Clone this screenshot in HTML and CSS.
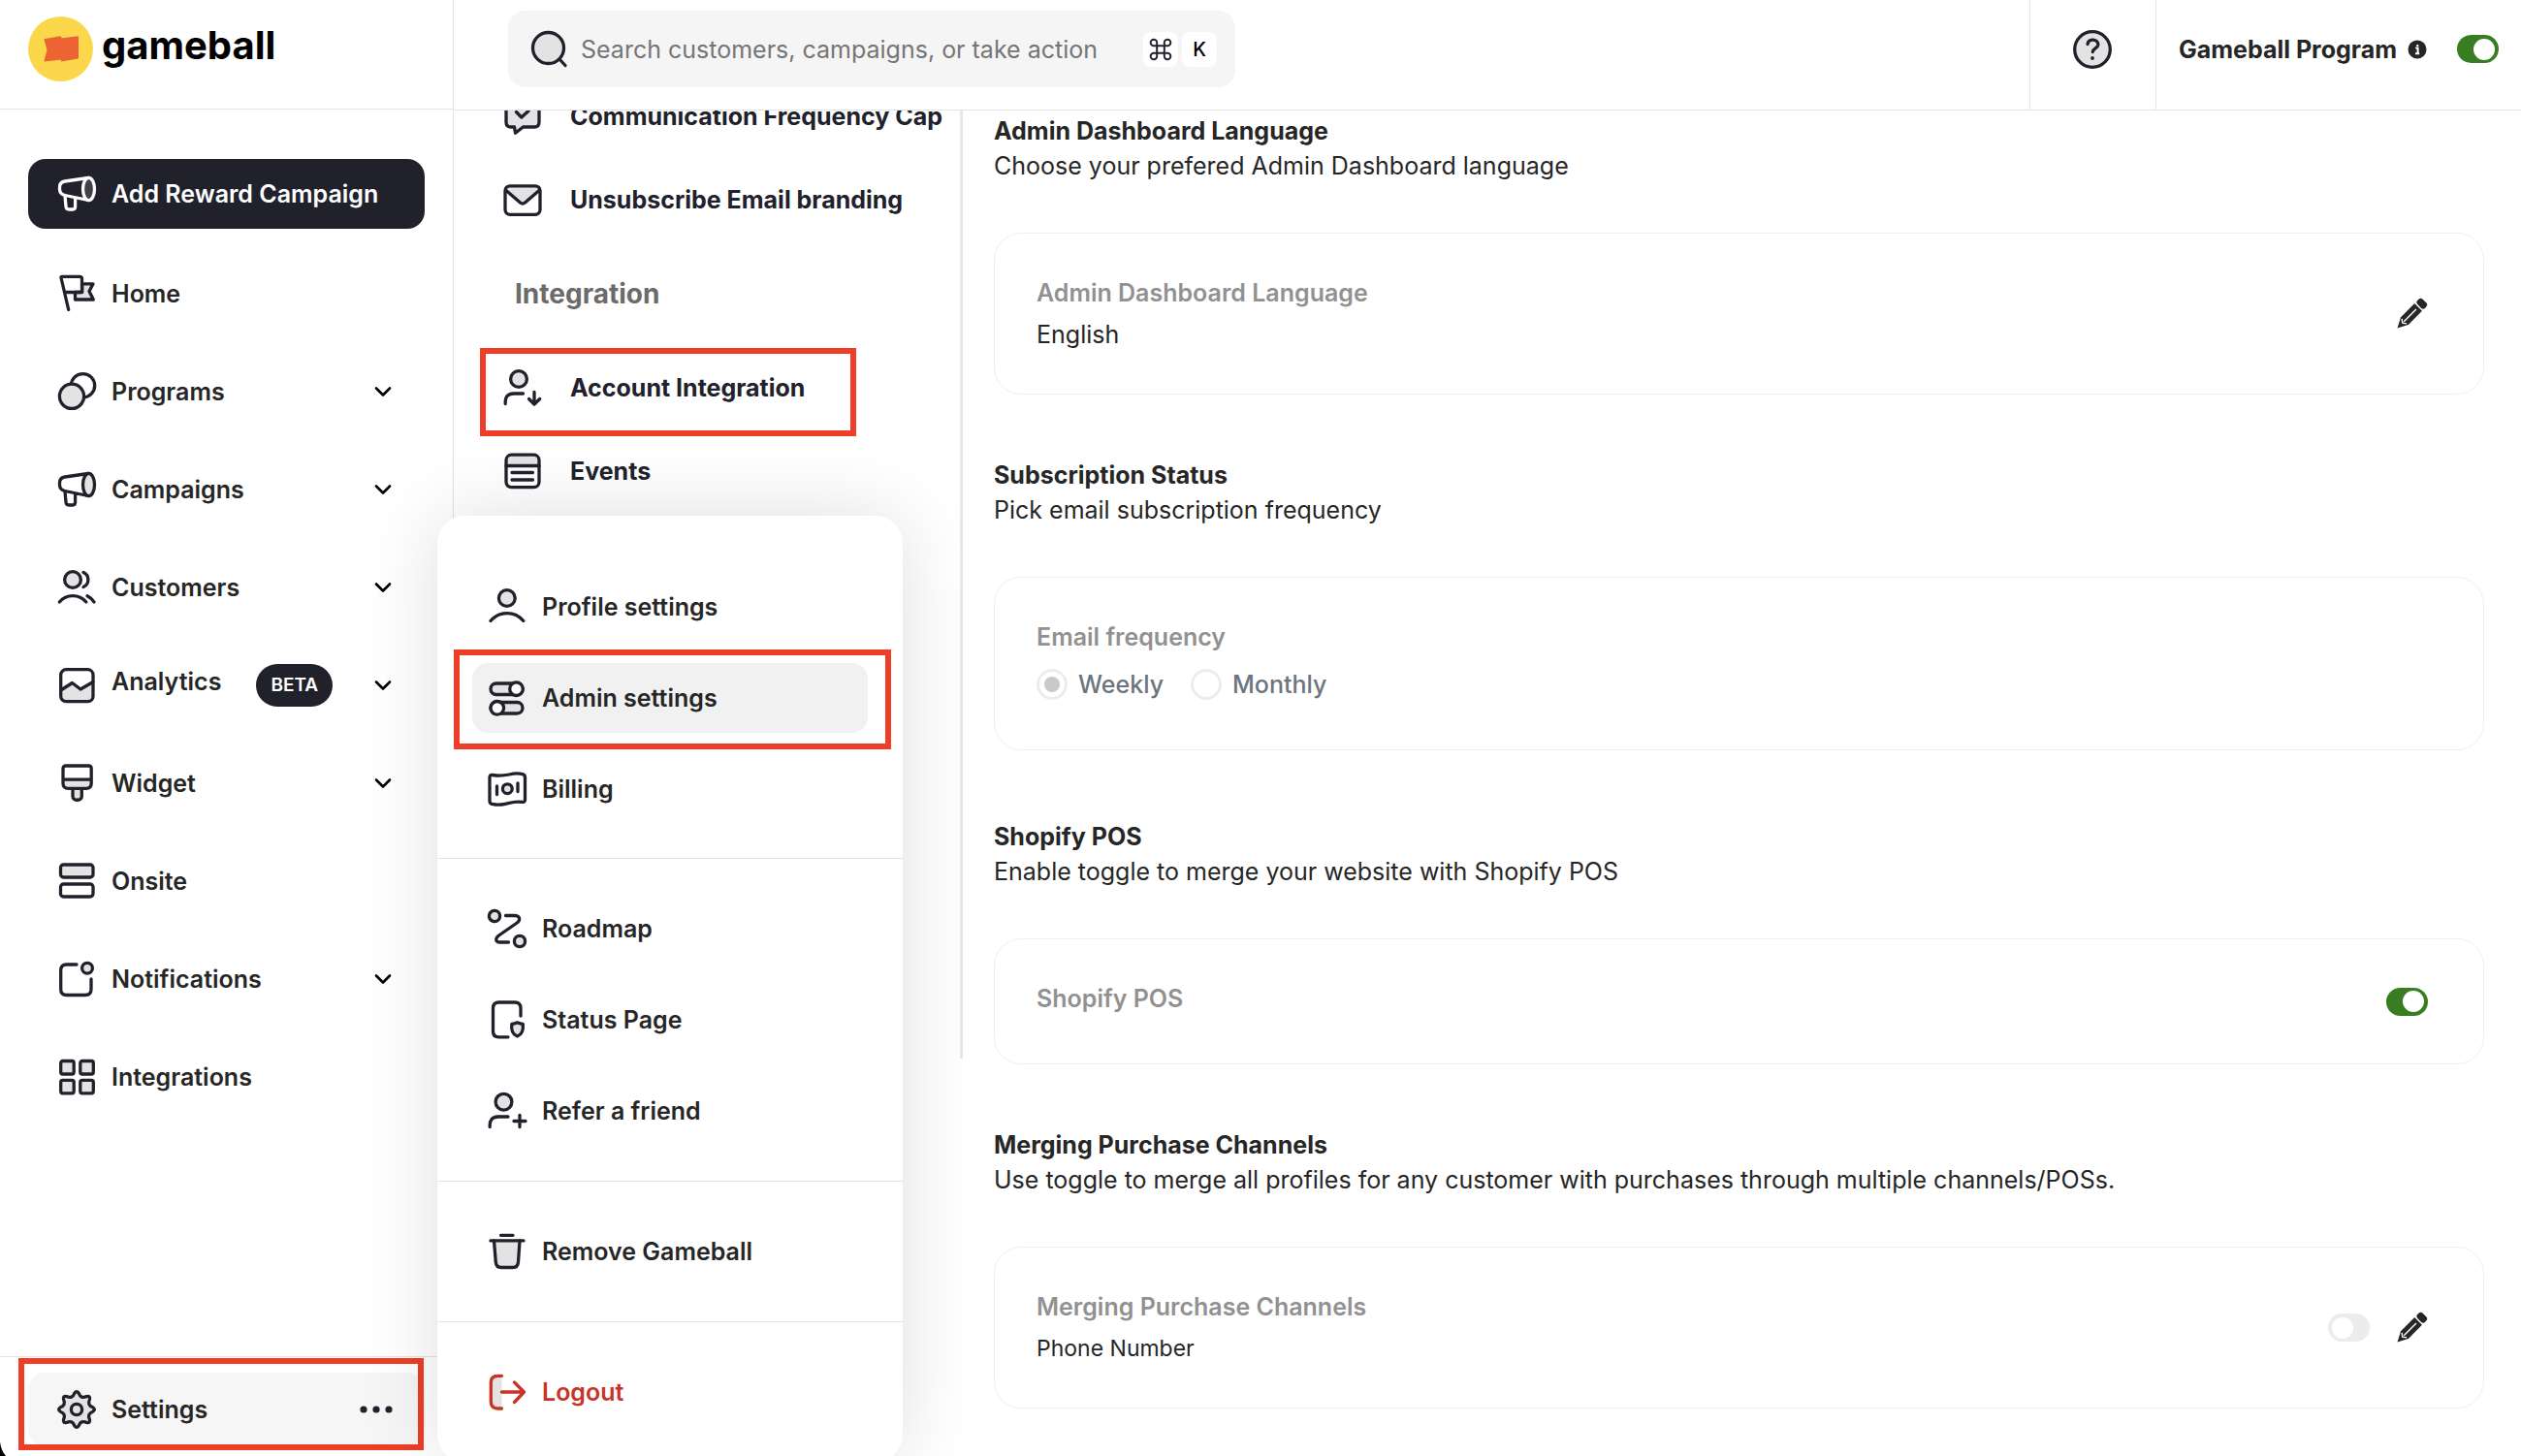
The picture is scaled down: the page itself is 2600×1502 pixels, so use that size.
FILE: index.html
```html
<!DOCTYPE html>
<html lang="en">
<head>
<meta charset="utf-8">
<meta name="viewport" content="width=device-width, initial-scale=1">
<title>Gameball – Admin settings</title>
<link rel="stylesheet" href="styles.css">
</head>
<body>
<div class="app">
  <aside class="sidebar">
    <a class="brand" href="#">
      <svg class="brand-mark" viewBox="0 0 66 66" aria-hidden="true"><circle cx="33" cy="33" r="33" fill="#fbd84b"/><path d="M17 23.5 33 20.8V22.8L50.5 20.8V42L34 45V43L17 45 20 34Z" fill="#ec6433" stroke="#ec6433" stroke-width="1.5" stroke-linejoin="round"/></svg>
      <span class="brand-name">gameball</span>
    </a>
    <nav class="nav" aria-label="Main">
      <button class="add-campaign" type="button">
        <svg class="icon" viewBox="0 0 40 40"><path class="line" d="M32 3.5 8 7C4 7.6 2.5 9.5 2.5 13v2c0 4 1.5 5.700 5.500 6.500L32 26.500M8 22 9 33C9.100 35 10 36 12 36h4c2 0 2.600-1 2.600-3V24"/><ellipse class="dim" cx="32.500" cy="15" rx="6" ry="11.700"/></svg>
        <span>Add Reward Campaign</span>
      </button>
      <a class="nav-item" href="#">
        <svg class="icon" viewBox="0 0 40 40"><path class="shade" d="M25.700 9.800H37L33 17.500 37.300 26H18.500V18.500H25.700Z"/><path class="line" d="M11.700 36.500 4 3.500Q3.800 2.300 5 2.300H23Q25.500 2.300 25.500 4.500V16Q25.500 18.500 23 18.500H7.500"/></svg>
        <span>Home</span>
      </a>
      <button class="nav-item" type="button" aria-expanded="false">
        <svg class="icon" viewBox="0 0 40 40"><circle class="line" cx="26.500" cy="13.800" r="12.200"/><circle class="shade" cx="15" cy="24.800" r="12.600"/></svg>
        <span>Programs</span>
        <svg class="chevron" viewBox="0 0 20 20"><path d="M3 6.500 10 13.500 17 6.500"/></svg>
      </button>
      <button class="nav-item" type="button" aria-expanded="false">
        <svg class="icon" viewBox="0 0 40 40"><path class="line" d="M32 3.500 8 7C4 7.600 2.500 9.500 2.500 13v2c0 4 1.500 5.700 5.500 6.500L32 26.500M8 22 9 33C9.100 35 10 36 12 36h4c2 0 2.600-1 2.600-3V24"/><ellipse class="shade" cx="32.500" cy="15" rx="6" ry="11.700"/></svg>
        <span>Campaigns</span>
        <svg class="chevron" viewBox="0 0 20 20"><path d="M3 6.500 10 13.500 17 6.500"/></svg>
      </button>
      <button class="nav-item" type="button" aria-expanded="false">
        <svg class="icon" viewBox="0 0 40 40"><circle class="shade" cx="16" cy="12" r="8.400"/><path class="line" d="M27 4.500a8.200 8.200 0 0 1 0 15M2.300 35C9.500 26.500 22.500 26.500 29.800 35M31 28.800Q35 30.800 38 35"/></svg>
        <span>Customers</span>
        <svg class="chevron" viewBox="0 0 20 20"><path d="M3 6.500 10 13.500 17 6.500"/></svg>
      </button>
      <button class="nav-item" type="button" aria-expanded="false">
        <svg class="icon" viewBox="0 0 40 40"><path fill="#e3e3e3" d="M3.700 25 15.500 17.500 24 24 37 16.500V31Q37 36.500 31 36.500H10Q3.700 36.500 3.700 31Z"/><rect class="line" x="3.700" y="3.700" width="33.300" height="33" rx="5.500"/><path class="line" d="M3.700 25 15.500 17.500 24 24 37 16.500"/></svg>
        <span class="raised">Analytics</span>
        <span class="badge">BETA</span>
        <svg class="chevron" viewBox="0 0 20 20"><path d="M3 6.500 10 13.500 17 6.500"/></svg>
      </button>
      <button class="nav-item" type="button" aria-expanded="false">
        <svg class="icon" viewBox="0 0 40 40"><path class="shade" d="M16 25.500V33.500C16 38.500 25.300 38.500 25.300 33.500V25.500"/><path fill="#e3e3e3" d="M6 16H35.200V25H6Z"/><path class="line" d="M9 2H32.500Q35.200 2 35.200 5V20Q35.200 25.300 30 25.300H11.500Q6 25.300 6 20V5Q6 2 9 2ZM6 16.200H35.200"/></svg>
        <span>Widget</span>
        <svg class="chevron" viewBox="0 0 20 20"><path d="M3 6.500 10 13.500 17 6.500"/></svg>
      </button>
      <a class="nav-item" href="#">
        <svg class="icon" viewBox="0 0 40 40"><rect class="shade" x="3.500" y="3" width="33.500" height="13" rx="3"/><rect class="line" x="3.500" y="23" width="33.500" height="13" rx="3"/></svg>
        <span>Onsite</span>
      </a>
      <button class="nav-item" type="button" aria-expanded="false">
        <svg class="icon" viewBox="0 0 40 40"><path class="line" d="M20 5H9.500Q3.700 5 3.700 11V30.500Q3.700 36.500 9.500 36.500H29Q35 36.500 35 30.500V20"/><circle class="shade" cx="31" cy="8.700" r="5.400"/></svg>
        <span>Notifications</span>
        <svg class="chevron" viewBox="0 0 20 20"><path d="M3 6.500 10 13.500 17 6.500"/></svg>
      </button>
      <a class="nav-item" href="#">
        <svg class="icon" viewBox="0 0 40 40"><rect class="shade" x="3.700" y="3.500" width="13.500" height="13.500" rx="2"/><rect class="shade" x="23.800" y="3.500" width="13.500" height="13.500" rx="2"/><rect class="shade" x="3.700" y="23.300" width="13.500" height="13.500" rx="2"/><rect class="shade" x="23.800" y="23.300" width="13.500" height="13.500" rx="2"/></svg>
        <span>Integrations</span>
      </a>
    </nav>
    <div class="sidebar-foot">
      <button class="nav-item nav-item-current" type="button" aria-haspopup="menu" aria-expanded="true">
        <svg class="icon" viewBox="0 0 40 40"><path class="shade" d="M36.800 17.800Q40 20 36.800 22.200 30.600 24.400 33.450 30.350 34.300 34.300 30.350 33.450 24.400 30.600 22.200 36.800 20 40 17.800 36.800 15.600 30.600 9.650 33.450 5.700 34.300 6.550 30.350 9.400 24.400 3.200 22.200 0 20 3.200 17.800 9.400 15.600 6.550 9.650 5.700 5.700 9.650 6.550 15.600 9.400 17.800 3.200 20 0 22.200 3.200 24.400 9.400 30.350 6.550 34.300 5.700 33.450 9.650 30.600 15.600 36.800 17.800Z"/><circle class="shade" cx="20" cy="20" r="5.600"/></svg>
        <span>Settings</span>
        <svg class="dots" viewBox="0 0 34 8"><circle cx="4" cy="4" r="3.600"/><circle cx="17" cy="4" r="3.600"/><circle cx="30" cy="4" r="3.600"/></svg>
      </button>
      <span class="callout callout-settings"></span>
    </div>
  </aside>

  <div class="workspace">
    <header class="topbar">
      <div class="search">
        <svg class="icon" viewBox="0 0 40 40"><circle class="shade" cx="19.500" cy="18.500" r="16"/><path class="line" d="M31 30 37 36.500"/></svg>
        <input class="search-input" type="text" aria-label="Search" placeholder="Search customers, campaigns, or take action">
        <kbd class="key"><svg class="command" viewBox="0 0 22 22" aria-label="Command"><path d="M7.500 7.500H14.500V14.500H7.500ZM7.500 7.500H5A3 3 0 1 1 7.500 5ZM14.500 7.500V5A3 3 0 1 1 17 7.500ZM14.500 14.500H17A3 3 0 1 1 14.500 17ZM7.500 14.500V17A3 3 0 1 1 5 14.500Z"/></svg></kbd>
        <kbd class="key">K</kbd>
      </div>
      <button class="help" type="button" aria-label="Help">
        <svg class="icon" viewBox="0 0 40 40"><circle class="shade" cx="20" cy="20" r="18.300"/><path class="line" d="M15 14.500C15.800 8 26.500 9 25.800 15.500 25.300 19 20.500 19 20.300 22.500"/><circle cx="20" cy="29" r="1.900" fill="#20212b"/></svg>
      </button>
      <div class="program">
        <label class="program-label" for="program-toggle">Gameball Program</label>
        <svg class="info" viewBox="0 0 20 20" aria-hidden="true"><circle cx="10" cy="10" r="9.500" fill="#262626"/><path d="M8.200 8.500H10.600V14M8 14.300H12.200M10.300 5V7" stroke="#fff" stroke-width="2" fill="none"/></svg>
        <input class="toggle" id="program-toggle" type="checkbox" checked>
      </div>
    </header>

    <div class="body">
      <nav class="settings-nav" aria-label="Settings">
        <div class="settings-list">
          <a class="settings-link" href="#">
            <svg class="icon" viewBox="0 0 40 40"><path class="shade" d="M8 3H32Q37 3 37 8V26Q37 31 32 31H20.500L12.500 37.300 11.500 31H8Q3 31 3 26V8Q3 3 8 3Z"/><path class="line" d="M13.500 15.500 18.800 21 26 14.500"/></svg>
            <span>Communication Frequency Cap</span>
          </a>
          <a class="settings-link" href="#">
            <svg class="icon" viewBox="0 0 40 40"><path fill="#e3e3e3" d="M3 7H37V10.500L20 25 3 10.500Z"/><rect class="line" x="2" y="5.800" width="36" height="29.500" rx="5"/><path class="line" d="M3 10.500 17.500 23Q20 25 22.500 23L37 10.500"/></svg>
            <span>Unsubscribe Email branding</span>
          </a>
          <h2 class="settings-group">Integration</h2>
          <a class="settings-link" href="#">
            <svg class="icon" viewBox="0 0 40 40"><circle class="shade" cx="16" cy="11" r="8.400"/><path class="line" d="M2.200 36.500C1.800 29 5 26 11 26H20.500M32 24.500V36.500M26.500 31.500 32 37 37.700 31.500"/></svg>
            <span>Account Integration</span>
            <span class="callout callout-account"></span>
          </a>
          <a class="settings-link" href="#">
            <svg class="icon" viewBox="0 0 40 40"><path fill="#e3e3e3" d="M4 4H36V14H4Z"/><rect class="line" x="3" y="3.200" width="34" height="33.500" rx="5.500"/><path class="line" d="M3 14.500H37M9 21.500H30.500M9 29H30.500"/></svg>
            <span>Events</span>
          </a>
        </div>
      </nav>

      <main class="content">
        <section class="setting">
          <h3 class="setting-title">Admin Dashboard Language</h3>
          <p class="setting-text">Choose your prefered Admin Dashboard language</p>
          <div class="card">
            <div class="card-body">
              <div class="card-label">Admin Dashboard Language</div>
              <div class="card-value">English</div>
            </div>
            <button class="edit" type="button" aria-label="Edit language">
              <svg class="pencil" viewBox="0 0 30 30"><g transform="translate(15 15) rotate(45)"><rect x="-5.500" y="-19" width="11" height="7.500" rx="3"/><path d="M-5.500-10H5.500V10L0 20.500-5.500 10Z"/><path d="M0-7V11M-3.500 10.500 0 13 3.500 10.500" fill="none" stroke="#fff" stroke-width="1.400"/></g></svg>
            </button>
          </div>
        </section>

        <section class="setting setting-choice">
          <h3 class="setting-title">Subscription Status</h3>
          <p class="setting-text">Pick email subscription frequency</p>
          <div class="card">
            <div class="card-body">
              <div class="card-label" id="frequency">Email frequency</div>
              <div class="radios" role="radiogroup" aria-labelledby="frequency">
                <label class="radio"><input type="radio" name="frequency" checked disabled>Weekly</label>
                <label class="radio"><input type="radio" name="frequency" disabled>Monthly</label>
              </div>
            </div>
          </div>
        </section>

        <section class="setting">
          <h3 class="setting-title">Shopify POS</h3>
          <p class="setting-text">Enable toggle to merge your website with Shopify POS</p>
          <div class="card">
            <div class="card-body">
              <label class="card-label" for="pos-toggle">Shopify POS</label>
            </div>
            <input class="toggle" id="pos-toggle" type="checkbox" checked>
          </div>
        </section>

        <section class="setting">
          <h3 class="setting-title">Merging Purchase Channels</h3>
          <p class="setting-text">Use toggle to merge all profiles for any customer with purchases through multiple channels/POSs.</p>
          <div class="card">
            <div class="card-body">
              <label class="card-label" for="merge-toggle">Merging Purchase Channels</label>
              <div class="card-value card-value-small">Phone Number</div>
            </div>
            <input class="toggle" id="merge-toggle" type="checkbox">
            <button class="edit" type="button" aria-label="Edit merging channels">
              <svg class="pencil" viewBox="0 0 30 30"><g transform="translate(15 15) rotate(45)"><rect x="-5.500" y="-19" width="11" height="7.500" rx="3"/><path d="M-5.500-10H5.500V10L0 20.500-5.500 10Z"/><path d="M0-7V11M-3.500 10.500 0 13 3.500 10.500" fill="none" stroke="#fff" stroke-width="1.400"/></g></svg>
            </button>
          </div>
        </section>
      </main>
    </div>
  </div>

  <div class="menu">
    <div class="menu-group menu-group-first">
      <a class="menu-item" href="#">
        <svg class="icon" viewBox="0 0 40 40"><circle class="shade" cx="19.800" cy="11" r="8.400"/><path class="line" d="M3 34.500C12 24 28 24 36.800 34.500"/></svg>
        <span>Profile settings</span>
      </a>
      <a class="menu-item menu-item-current" href="#">
        <svg class="icon" viewBox="0 0 40 40"><rect class="shade" x="3" y="5" width="33" height="11.500" rx="5.700"/><circle class="solid" cx="29.500" cy="10.700" r="6.800"/><rect class="shade" x="3" y="24.500" width="33" height="11.500" rx="5.700"/><circle class="solid" cx="9.800" cy="30.300" r="6.800"/></svg>
        <span>Admin settings</span>
        <span class="callout callout-admin"></span>
      </a>
      <a class="menu-item" href="#">
        <svg class="icon" viewBox="0 0 40 40"><path class="line" d="M2 8C2 6 3 5.200 5 5.500 12 6.600 16 6.300 22 5 27 3.800 32 3.600 36 4.600 38 5.100 38.500 6.500 38.500 8V31C38.500 33 37 33.700 35 33.400 29 32.300 24 34 18 35.300 13 36.400 8 36.300 4 35.300 2.500 35 2 34 2 32ZM9.500 17V25.500M31 14V22.500"/><circle class="shade" cx="20.300" cy="19.700" r="4.900"/></svg>
        <span>Billing</span>
      </a>
    </div>
    <div class="menu-group">
      <a class="menu-item" href="#">
        <svg class="icon" viewBox="0 0 40 40"><circle class="shade" cx="7" cy="7" r="5.600"/><circle class="shade" cx="33" cy="33" r="5.600"/><path class="line" d="M18.500 6.500H27C33.500 6.500 34.500 11 29.500 14.500L11.500 27C7 30.500 8.500 34 12.500 34H21.500"/></svg>
        <span>Roadmap</span>
      </a>
      <a class="menu-item" href="#">
        <svg class="icon" viewBox="0 0 40 40"><path class="line" d="M34 16V8Q34 2 28 2H11.500Q5.500 2 5.500 8V32Q5.500 37.800 11.500 37.800H21"/><path class="shade" d="M30.500 22.800Q33.500 24.300 36.300 24.500C37 31 35 35.300 30.500 37 26 35.300 24 31 24.800 24.500Q27.500 24.300 30.500 22.800Z"/></svg>
        <span>Status Page</span>
      </a>
      <a class="menu-item" href="#">
        <svg class="icon" viewBox="0 0 40 40"><circle class="shade" cx="16.500" cy="10.700" r="8.400"/><path class="line" d="M2.200 36.500C1.800 29 5 26 11 26H21M33 24.500V36.500M27 30.500H39"/></svg>
        <span>Refer a friend</span>
      </a>
    </div>
    <div class="menu-group">
      <a class="menu-item" href="#">
        <svg class="icon" viewBox="0 0 40 40"><path class="shade" d="M6.500 9 8.300 31Q8.700 36.500 14 36.500H26Q31 36.500 31.500 31L33 9"/><path class="line" d="M3 8.900H37M13.500 3.300H26"/></svg>
        <span>Remove Gameball</span>
      </a>
    </div>
    <div class="menu-group">
      <a class="menu-item menu-item-danger" href="#">
        <svg class="icon" viewBox="0 0 40 40"><path fill="#e3e3e3" d="M14.500 3.300H11Q3.300 3.300 3.300 10V30Q3.300 37 11 37H14.500Z"/><path class="line" d="M14.500 3.300H11Q3.300 3.300 3.300 10V30Q3.300 37 11 37H14.500M14.500 20H37M27.500 10 37.500 20 27.500 30.500"/></svg>
        <span>Logout</span>
      </a>
    </div>
  </div>
  <svg class="window-corner" viewBox="0 0 6 15" aria-hidden="true"><path d="M0 0C.5 6 2.500 11 6 15H0Z"/></svg>
</div>
</body>
</html>
```

FILE: styles.css
```css
*, *::before, *::after { box-sizing: border-box; }

body {
  margin: 0;
  background: #fff;
  color: #262626;
  font-family: Inter, "Liberation Sans", sans-serif;
  font-size: 25px;
  line-height: 36px;
}

a { color: inherit; text-decoration: none; }
button { border: 0; background: none; padding: 0; color: inherit; font: inherit; text-align: left; cursor: pointer; }
input { font: inherit; margin: 0; }
h2, h3, p { margin: 0; }

.app {
  position: relative;
  display: flex;
  height: 100vh;
  overflow: hidden;
}

/* Icons */
.icon { width: 40px; height: 40px; flex: none; overflow: visible; }
.line, .shade, .solid, .dim {
  fill: none;
  stroke: #20212b;
  stroke-width: 3.3;
  stroke-linecap: round;
  stroke-linejoin: round;
}
.shade { fill: #e3e3e3; }
.solid { fill: #fff; }
.chevron { width: 20px; height: 20px; flex: none; margin-left: auto; }
.chevron path { fill: none; stroke: #000; stroke-width: 2.6; stroke-linecap: round; stroke-linejoin: round; }

/* Sidebar */
.sidebar {
  display: flex;
  flex-direction: column;
  flex: none;
  width: 468px;
  border-right: 1px solid #e3e3e3;
}
.brand {
  display: flex;
  align-items: flex-start;
  gap: 9px;
  height: 113px;
  padding: 17px 29px 0;
  border-bottom: 1px solid #e3e3e3;
}
.brand-mark { width: 67px; height: 67px; }
.brand-name { color: #000; font-size: 40px; font-weight: 700; line-height: 60px; }

.nav {
  display: flex;
  flex-direction: column;
  gap: 25px;
  padding: 51px 29px 0;
}
.add-campaign, .nav-item {
  display: flex;
  align-items: center;
  gap: 16px;
  width: 100%;
  height: 76px;
  padding: 0 33px 0 30px;
  border-radius: 18px;
  font-weight: 600;
}
.add-campaign { height: 72px; margin-bottom: 4px; background: #20212b; color: #fff; }
.add-campaign .line { stroke: #fff; }
.add-campaign .dim { fill: #414249; stroke: #fff; }
.raised { padding-bottom: 8px; }
.badge {
  margin-left: 20px;
  padding: 0 15px;
  border-radius: 22px;
  background: #20212b;
  color: #fff;
  font-size: 19px;
  line-height: 44px;
}

.sidebar-foot {
  position: relative;
  margin-top: auto;
  padding: 16px 29px 10px;
  border-top: 1px solid #e3e3e3;
}
.nav-item-current { background: #f6f6f6; }
.dots { width: 34px; height: 8px; margin-left: auto; fill: #20212b; }

/* Highlight frames drawn over the controls */
.callout { position: absolute; border: 6px solid #ee3e27; pointer-events: none; }
.callout-settings { inset: 1px 30px 6px 19px; }
.callout-account { top: 2px; left: 27px; width: 388px; height: 91px; }
.callout-admin { inset: -14px -24px -17px -19px; }

/* Top bar */
.workspace { display: flex; flex-direction: column; flex: 1; min-width: 0; }
.topbar {
  display: flex;
  flex: none;
  height: 114px;
  border-bottom: 1px solid #e3e3e3;
}
.search {
  display: flex;
  align-items: center;
  gap: 4px;
  width: 750px;
  height: 79px;
  margin: 11px auto 0 56px;
  padding: 0 19px 0 22px;
  border-radius: 18px;
  background: #f5f5f5;
}
.search-input {
  flex: 1;
  min-width: 0;
  height: 48px;
  padding: 0 0 0 9px;
  border: 0;
  outline: 0;
  background: none;
}
.search-input::placeholder { color: #757575; opacity: 1; }
.key {
  display: flex;
  align-items: center;
  justify-content: center;
  width: 36px;
  height: 36px;
  border-radius: 8px;
  background: #fff;
  color: #000;
  font: 500 20px/36px Inter, "Liberation Sans", sans-serif;
}
.command { width: 24px; height: 24px; fill: none; stroke: #20212b; stroke-width: 1.8; }
.help {
  display: flex;
  justify-content: center;
  align-items: flex-start;
  width: 130px;
  padding-top: 31px;
  border-left: 1px solid #e8e8e8;
}
.program {
  display: flex;
  align-items: center;
  height: 113px;
  padding: 0 23px 12px;
  border-left: 1px solid #e8e8e8;
}
.program-label { font-weight: 700; }
.info { width: 20px; height: 20px; margin: 0 31px 0 11px; }

.toggle {
  display: flex;
  align-items: center;
  flex: none;
  width: 43px;
  height: 29px;
  padding: 0 4px;
  border-radius: 15px;
  background: #ececee;
  appearance: none;
}
.toggle::before { content: ""; width: 22px; height: 22px; border-radius: 50%; background: #fff; }
.toggle:checked { justify-content: flex-end; background: #387d22; }

/* Settings navigation */
.body { display: flex; align-items: flex-start; flex: 1; min-height: 0; }
.settings-nav {
  flex: none;
  width: 525px;
  height: 978px;
  border-right: 3px solid #e8e8e8;
  overflow: hidden;
}
.settings-list { margin-top: -37px; }
.settings-link {
  position: relative;
  display: flex;
  align-items: center;
  gap: 29px;
  height: 86px;
  padding-left: 51px;
  color: #20212b;
  font-weight: 700;
  white-space: nowrap;
}
.settings-group {
  padding-left: 63px;
  color: #6b6b6b;
  font-size: 28px;
  font-weight: 700;
  line-height: 108px;
}

/* Settings content */
.content {
  display: flex;
  flex-direction: column;
  gap: 65px;
  flex: 1;
  min-width: 0;
  padding: 3px 38px 0 32px;
}
.setting-choice { margin-bottom: 6px; }
.setting-title { font-size: 25px; font-weight: 700; }
.setting-text { margin-bottom: 51px; }
.card {
  display: flex;
  align-items: center;
  gap: 28px;
  padding: 43px 57px 43px 43px;
  border: 1px solid #efefef;
  border-radius: 28px;
}
.card-body { display: flex; flex-direction: column; gap: 7px; flex: 1; min-height: 42px; }
.card-label { color: #919191; font-weight: 600; }
.card-value-small { font-size: 23px; }
.radios { display: flex; align-items: center; gap: 28px; height: 48px; }
.radio { display: flex; align-items: center; gap: 11px; color: #6c757d; font-weight: 500; }
.radio input {
  display: flex;
  align-items: center;
  justify-content: center;
  width: 32px;
  height: 32px;
  border: 3px solid #ececee;
  border-radius: 50%;
  appearance: none;
}
.radio input:checked::before { content: ""; width: 16px; height: 16px; border-radius: 50%; background: #c9c9c9; }
.edit { width: 32px; height: 30px; }
.pencil { display: block; width: 30px; height: 30px; overflow: visible; fill: #262626; }

/* Account menu */
.menu {
  position: absolute;
  bottom: -6px;
  left: 451px;
  width: 480px;
  border-radius: 28px;
  background: #fff;
  box-shadow: 0 0 80px rgba(0, 0, 0, .13);
}
.menu-group {
  display: flex;
  flex-direction: column;
  gap: 22px;
  padding: 36px;
  border-top: 1px solid #e3e3e3;
}
.menu-group-first { padding-top: 58px; padding-bottom: 35px; border-top: 0; }
.menu-item {
  position: relative;
  display: flex;
  align-items: center;
  gap: 16px;
  height: 72px;
  padding-left: 16px;
  border-radius: 16px;
  font-weight: 600;
}
.menu-item-current { background: #f1f1f1; }
.menu-item-danger { color: #c93227; }
.menu-item-danger .line { stroke: #c93227; }

.window-corner { position: absolute; bottom: 0; left: 0; width: 6px; height: 15px; }
```
